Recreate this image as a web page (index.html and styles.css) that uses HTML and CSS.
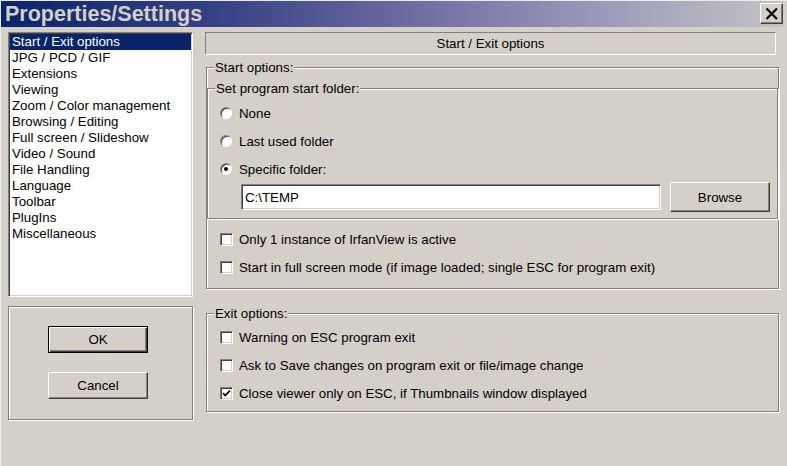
FILE: index.html
```html
<!DOCTYPE html>
<html lang="en">
<head>
  <meta charset="UTF-8" />
  <title>Properties/Settings</title>
  <link rel="stylesheet" href="styles.css">
</head>
<body>
  <div class="window">
    <div class="titlebar">
      <span class="title">Properties/Settings</span>
      <button class="close">
        <svg width="21" height="19" viewBox="0 0 21 19">
          <path d="M5.5 4.5 L16 15 M16 4.5 L5.5 15" stroke="#000" stroke-width="2.2" fill="none"/>
        </svg>
      </button>
    </div>

    <div class="body">
      <div class="side">
        <ul class="list">
          <li class="selected">Start / Exit options</li>
          <li>JPG / PCD / GIF</li>
          <li>Extensions</li>
          <li>Viewing</li>
          <li>Zoom / Color management</li>
          <li>Browsing / Editing</li>
          <li>Full screen / Slideshow</li>
          <li>Video / Sound</li>
          <li>File Handling</li>
          <li>Language</li>
          <li>Toolbar</li>
          <li>PlugIns</li>
          <li>Miscellaneous</li>
        </ul>
        <div class="actions">
          <button class="btn default">OK</button>
          <button class="btn">Cancel</button>
        </div>
      </div>

      <div class="main">
        <div class="heading">Start / Exit options</div>

        <fieldset class="group start">
          <legend>Start options:</legend>
          <fieldset class="group folder">
            <legend>Set program start folder:</legend>
            <label class="opt"><span class="radio"></span>None</label>
            <label class="opt"><span class="radio"></span>Last used folder</label>
            <label class="opt"><span class="radio on"></span>Specific folder:</label>
            <div class="path-row">
              <input class="path" type="text" value="C:\TEMP">
              <button class="btn browse">Browse</button>
            </div>
          </fieldset>
          <div class="checks">
            <label class="opt"><span class="check"></span>Only 1 instance of IrfanView is active</label>
            <label class="opt"><span class="check"></span>Start in full screen mode (if image loaded; single ESC for program exit)</label>
          </div>
        </fieldset>

        <fieldset class="group exit">
          <legend>Exit options:</legend>
          <div class="checks">
            <label class="opt"><span class="check"></span>Warning on ESC program exit</label>
            <label class="opt"><span class="check"></span>Ask to Save changes on program exit or file/image change</label>
            <label class="opt"><span class="check">
              <svg width="11" height="11" viewBox="0 0 11 11"><path d="M2 5 L4.2 7.6 L9 2.6" stroke="#000" stroke-width="1.7" fill="none"/></svg>
            </span>Close viewer only on ESC, if Thumbnails window displayed</label>
          </div>
        </fieldset>
      </div>
    </div>
  </div>
</body>
</html>
```

FILE: styles.css
```css
body {
  margin: 0;
  font-family: "Liberation Sans", Arial, sans-serif;
  font-size: 13.3px;
  color: #000;
}
.window {
  width: 787px;
  height: 466px;
  background: #d4d0c8;
  box-shadow: inset 1px 1px 0 #ececec;
  overflow: hidden;
}
.titlebar {
  display: flex;
  justify-content: space-between;
  align-items: flex-start;
  height: 26px;
  margin: 1px 4px 0 1px;
  padding-left: 4px;
  background: linear-gradient(to right, #0a246a 0%, #3c4488 30%, #7c7aaa 60%, #a4a4bc 82%, #c2c2c6 100%);
}
.title {
  line-height: 26px;
  font-size: 21.5px;
  font-weight: bold;
  color: #d4d0c8;
}
.close {
  display: flex;
  align-items: center;
  justify-content: center;
  width: 23px;
  height: 21px;
  margin-top: 2px;
  padding: 0;
  background: #d4d0c8;
  border: 1px solid;
  border-color: #fff #404040 #404040 #fff;
  box-shadow: inset -1px -1px 0 #808080;
}
.body {
  display: flex;
  gap: 12px;
  padding: 5px 0 0 8px;
}
.side {
  width: 185px;
}
.list {
  box-sizing: border-box;
  height: 265px;
  margin: 0;
  padding: 1px;
  list-style: none;
  background: #fff;
  border: 1px solid;
  border-color: #808080 #fff #fff #808080;
  box-shadow: inset 1px 1px 0 #404040, inset -1px -1px 0 #d4d0c8;
}
.list li {
  height: 16px;
  line-height: 16px;
  padding-left: 2px;
  white-space: nowrap;
}
.list li.selected {
  background: #0a246a;
  color: #fff;
}
.actions {
  box-sizing: border-box;
  display: flex;
  flex-direction: column;
  gap: 19px;
  height: 114px;
  margin-top: 9px;
  padding: 19px 0 0 39px;
  border: 1px solid #808080;
  box-shadow: inset 1px 1px 0 #fff, 1px 1px 0 #fff;
}
.btn {
  box-sizing: border-box;
  width: 100px;
  height: 27px;
  padding: 0;
  font-family: inherit;
  font-size: 13.3px;
  color: #000;
  background: #d4d0c8;
  border: 1px solid;
  border-color: #fff #404040 #404040 #fff;
  box-shadow: inset -1px -1px 0 #808080;
}
.btn.default {
  border: 1px solid #000;
  box-shadow: inset 1px 1px 0 #fff, inset -1px -1px 0 #404040, inset -2px -2px 0 #808080;
}
.main {
  width: 575px;
}
.heading {
  box-sizing: border-box;
  width: 571px;
  height: 23px;
  line-height: 21px;
  text-align: center;
  border: 1px solid;
  border-color: #808080 #fff #fff #808080;
}
.group {
  box-sizing: border-box;
  min-width: 0;
  margin: 0;
  padding: 0;
  border: 1px solid #808080;
  box-shadow: inset 1px 1px 0 #fff, 1px 1px 0 #fff;
}
.group legend {
  margin-left: 7px;
  padding: 0 1px;
  line-height: 15px;
  background: #d4d0c8;
}
.start {
  width: 573px;
  margin: 5px 0 0 1px;
  padding-top: 6px;
}
.folder {
  padding: 3px 0 6px;
}
.exit {
  width: 573px;
  margin: 17px 0 0 1px;
  padding-top: 2px;
}
.opt {
  display: flex;
  align-items: center;
  gap: 6px;
  height: 28px;
  padding-left: 12px;
  white-space: nowrap;
}
.checks {
  padding: 6px 0 7px 1px;
}
.exit .checks {
  padding: 0 0 4px 1px;
}
.radio {
  box-sizing: border-box;
  display: flex;
  align-items: center;
  justify-content: center;
  width: 12px;
  height: 12px;
  margin-right: 1px;
  border-radius: 50%;
  background: #fff;
  border: 1px solid;
  border-color: #808080 #fff #fff #808080;
  box-shadow: inset 1px 1px 0 #404040;
}
.radio.on::after {
  content: "";
  width: 4px;
  height: 4px;
  border-radius: 50%;
  background: #000;
}
.check {
  box-sizing: border-box;
  display: flex;
  align-items: center;
  justify-content: center;
  width: 13px;
  height: 13px;
  background: #fff;
  border: 1px solid;
  border-color: #808080 #fff #fff #808080;
  box-shadow: inset 1px 1px 0 #404040, inset -1px -1px 0 #d4d0c8;
}
.path-row {
  display: flex;
  align-items: center;
  gap: 9px;
  height: 30px;
  margin-top: -1px;
  padding-left: 33px;
}
.path {
  box-sizing: border-box;
  width: 420px;
  height: 26px;
  padding: 0 3px;
  font-family: inherit;
  font-size: 13.3px;
  background: #fff;
  border: 1px solid;
  border-color: #808080 #fff #fff #808080;
  box-shadow: inset 1px 1px 0 #404040, inset -1px -1px 0 #d4d0c8;
  outline: none;
}
.browse {
  height: 30px;
}
```
